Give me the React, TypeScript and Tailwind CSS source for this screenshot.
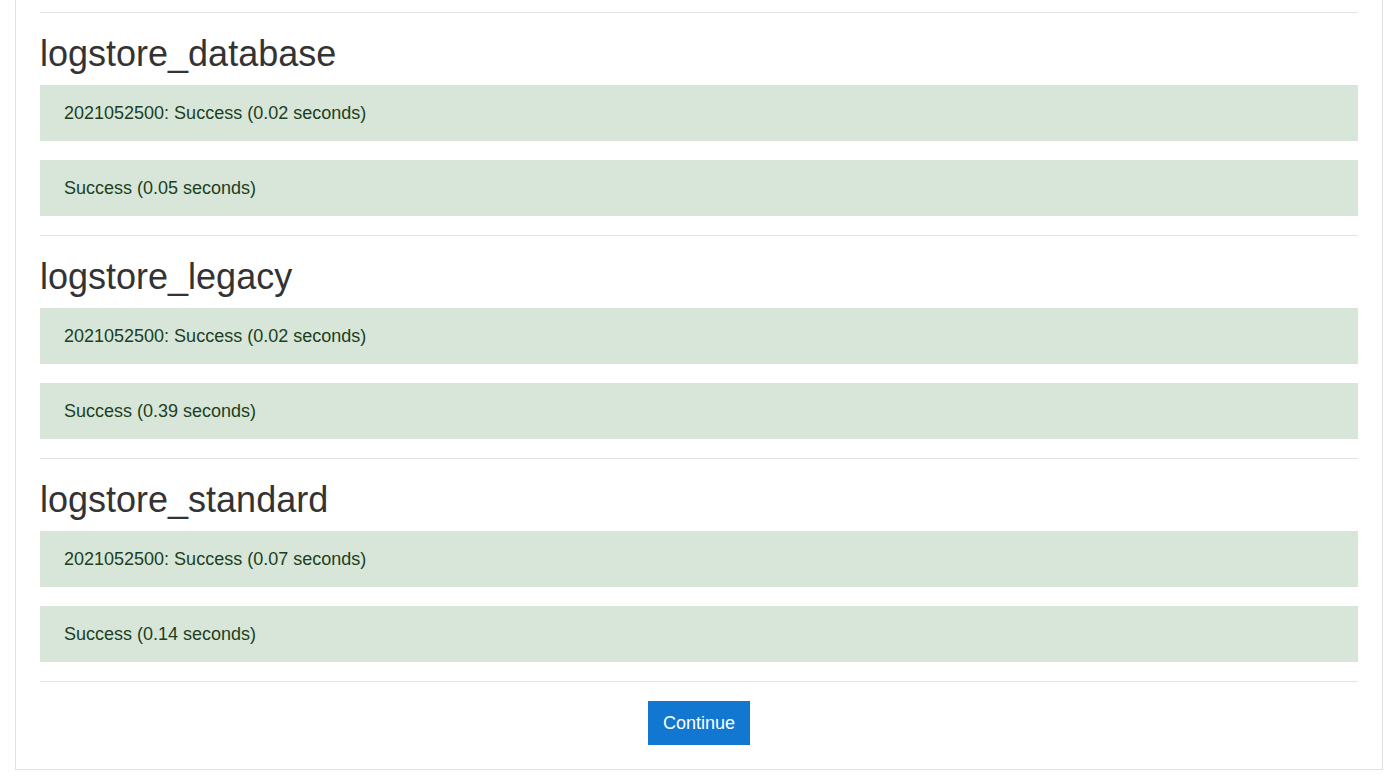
const sections = [
  {
    name: "logstore_database",
    messages: ["2021052500: Success (0.02 seconds)", "Success (0.05 seconds)"],
  },
  {
    name: "logstore_legacy",
    messages: ["2021052500: Success (0.02 seconds)", "Success (0.39 seconds)"],
  },
  {
    name: "logstore_standard",
    messages: ["2021052500: Success (0.07 seconds)", "Success (0.14 seconds)"],
  },
];

export default function App() {
  return (
    <div className="min-h-[777px] bg-white font-['Liberation_Sans',Arial,sans-serif]">
      <div className="ml-[15px] w-[1368px] border-x border-b border-[#dee2e6] px-[24px] pt-[12px] pb-[24px]">
        {sections.map((section) => (
          <div key={section.name}>
            <hr className="border-t border-[#e3e3e3]" />
            <h2 className="mt-[19px] mb-[10px] text-[36px] leading-[43px] font-normal text-[#333333]">
              {section.name}
            </h2>
            {section.messages.map((msg) => (
              <div
                key={msg}
                className="mb-[19px] bg-[#d7e6d8] px-[24px] py-[14px] text-[18px] leading-[28px] text-[#1c3f1e]"
              >
                {msg}
              </div>
            ))}
          </div>
        ))}
        <hr className="border-t border-[#e3e3e3]" />
        <div className="mt-[19px] flex justify-center">
          <button className="bg-[#1177d1] px-[15px] py-[8px] text-[18px] leading-[28px] text-white">
            Continue
          </button>
        </div>
      </div>
    </div>
  );
}
